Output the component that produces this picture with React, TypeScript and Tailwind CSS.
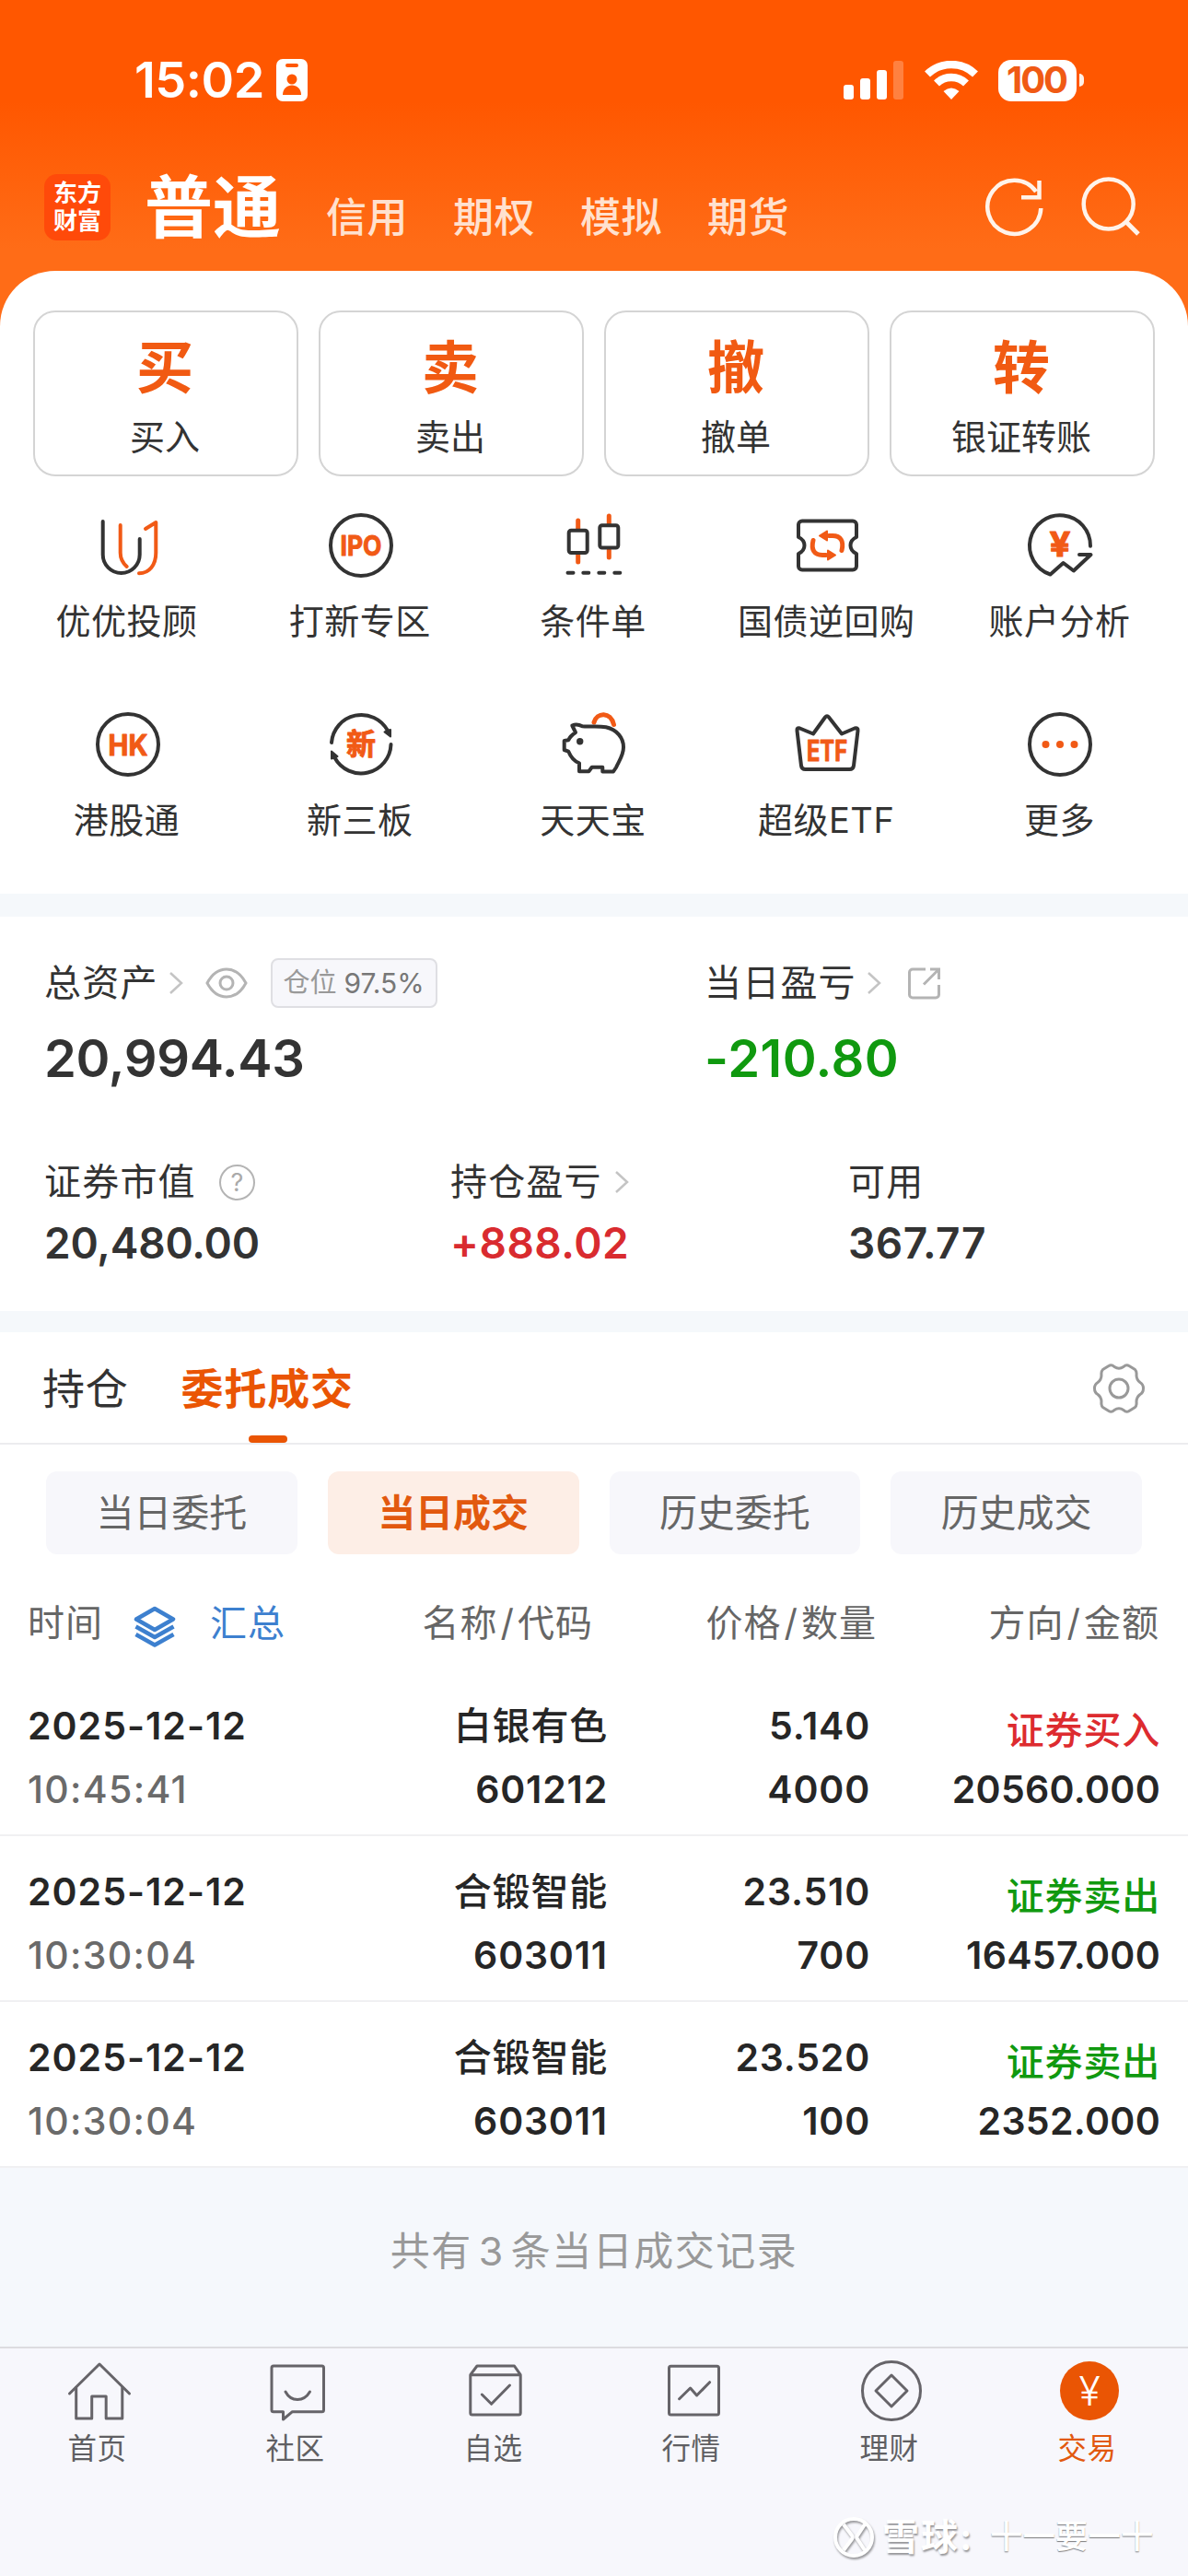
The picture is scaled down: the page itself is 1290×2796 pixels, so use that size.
import type { ReactNode } from "react";

const accountTabs = ["信用", "期权", "模拟", "期货"];

const quickActions = [
  { mark: "买", label: "买入" },
  { mark: "卖", label: "卖出" },
  { mark: "撤", label: "撤单" },
  { mark: "转", label: "银证转账" },
];

const DARK = "#333333";
const ORANGE = "#f15a16";

function GridIcon({ children }: { children: ReactNode }) {
  return (
    <svg
      width="72"
      height="72"
      viewBox="0 0 72 72"
      fill="none"
      stroke={DARK}
      strokeWidth="4"
      strokeLinecap="round"
      strokeLinejoin="round"
      className="overflow-visible"
    >
      {children}
    </svg>
  );
}

function IconText({ children, y, size, length }: { children: string; y: number; size: number; length: number }) {
  return (
    <text
      x="36"
      y={y}
      fontSize={size}
      fontWeight="700"
      textAnchor="middle"
      textLength={length}
      lengthAdjust="spacingAndGlyphs"
      fill={ORANGE}
      stroke={ORANGE}
      strokeWidth="1"
    >
      {children}
    </text>
  );
}

const features: { label: string; icon: ReactNode }[] = [
  {
    label: "优优投顾",
    icon: (
      <GridIcon>
        <path d="M8.7 10v36a20 20 0 0 0 40 0V29" />
        <path d="M27.7 14v30c0 6 2.5 11 7 15M55 18l11.3-7v33c0 13-7 22-18.3 22.3" stroke={ORANGE} />
      </GridIcon>
    ),
  },
  {
    label: "打新专区",
    icon: (
      <GridIcon>
        <circle cx="36" cy="36" r="33" />
        <IconText y={47} size={30} length={45}>IPO</IconText>
      </GridIcon>
    ),
  },
  {
    label: "条件单",
    icon: (
      <GridIcon>
        <path d="M18.7 9v9M18.7 46v8M52.3 4v8.5M52.3 41v8" stroke={ORANGE} strokeWidth="5" />
        <rect x="8.7" y="19.7" width="20" height="24.3" rx="2.5" />
        <rect x="42.3" y="14.3" width="20" height="24.3" rx="2.5" />
        <path d="M7.5 65.7h6M24.3 65.7h6M41.3 65.7h6M58.3 65.7h6" />
      </GridIcon>
    ),
  },
  {
    label: "国债逆回购",
    icon: (
      <GridIcon>
        <path d="M9 9.5h55a4 4 0 0 1 4 4V27q-6.5 3-6.5 9t6.5 9v13.5a4 4 0 0 1-4 4H9a4 4 0 0 1-4-4V45q6.5-3 6.5-9T5 27V13.5a4 4 0 0 1 4-4z" />
        <path d="M21 30.5c-2.5 10 1 16 10 16h4M52 41.5c2.5-10-1-16-10-16h-4" stroke={ORANGE} strokeWidth="5" />
        <path d="M37 41.5l8 5-8 5zM36 20.5l-8 5 8 5z" fill={ORANGE} stroke={ORANGE} strokeWidth="2" />
      </GridIcon>
    ),
  },
  {
    label: "账户分析",
    icon: (
      <GridIcon>
        <path d="M69 36.7A33 33 0 1 0 25.5 67.5L39.6 55l11.2 8.5L69.5 46H57" />
        <IconText y={48} size={37} length={23}>¥</IconText>
      </GridIcon>
    ),
  },
  {
    label: "港股通",
    icon: (
      <GridIcon>
        <circle cx="36" cy="36" r="33" />
        <IconText y={47.5} size={31} length={43}>HK</IconText>
      </GridIcon>
    ),
  },
  {
    label: "新三板",
    icon: (
      <GridIcon>
        <path d="M4 34A32.5 32.5 0 0 1 65 21M68.5 36A32.5 32.5 0 0 1 7.5 50.5" />
        <path d="M61.5 22.5l6.5-2.5v7.5zM4 43.5v8l6.5-2.5z" fill={DARK} strokeWidth="2" />
        <IconText y={47} size={32} length={32}>新</IconText>
      </GridIcon>
    ),
  },
  {
    label: "天天宝",
    icon: (
      <GridIcon>
        <path d="M36 12C39 1 54 0 57.5 14.5" stroke={ORANGE} strokeWidth="5" />
        <path d="M12.3 15.5q5-2.5 11 .8C32 17 40 15.5 49 17.3 61 20 68 29 68 39c0 9-5 15-8 22l-3 4.5H45.3v-4.8H33.7l-3.4 4.6H20v-9C14 54 10.5 49 8.3 43.7L3.7 42V32l4.6-.7Q10 27 16 23z" />
        <circle cx="20.7" cy="32.7" r="3.7" fill={DARK} stroke="none" />
      </GridIcon>
    ),
  },
  {
    label: "超级ETF",
    icon: (
      <GridIcon>
        <path d="M6.5 18.5L21 24.5 34 6.500q2-2.5 4 0L52 24.5l14-6q4-1 3.5 2.5l-4.5 38q-.5 4-4.5 4h-48q-4 0-4.5-4L3.500 21q-.5-3.5 3-2.5z" />
        <IconText y={54} size={31} length={44}>ETF</IconText>
      </GridIcon>
    ),
  },
  {
    label: "更多",
    icon: (
      <GridIcon>
        <circle cx="36" cy="36" r="33" />
        <g fill={ORANGE} stroke="none">
          <circle cx="20.5" cy="36" r="4" />
          <circle cx="36" cy="36" r="4" />
          <circle cx="51.5" cy="36" r="4" />
        </g>
      </GridIcon>
    ),
  },
];

const recordTabs = ["当日委托", "当日成交", "历史委托", "历史成交"];

const columns = [
  ["名称", "代码"],
  ["价格", "数量"],
  ["方向", "金额"],
];

const deals = [
  { date: "2025-12-12", time: "10:45:41", name: "白银有色", code: "601212", price: "5.140", qty: "4000", side: "buy", amount: "20560.000" },
  { date: "2025-12-12", time: "10:30:04", name: "合锻智能", code: "603011", price: "23.510", qty: "700", side: "sell", amount: "16457.000" },
  { date: "2025-12-12", time: "10:30:04", name: "合锻智能", code: "603011", price: "23.520", qty: "100", side: "sell", amount: "2352.000" },
];

const navItems: { label: string; active?: boolean; icon: ReactNode }[] = [
  {
    label: "首页",
    icon: (
      <>
        <path d="M3.5 39L36 7l32.5 32" />
        <path d="M10.7 32.5V66h17V42h15.5v24h17.6V32.5" />
      </>
    ),
  },
  {
    label: "社区",
    icon: (
      <>
        <path d="M10 9h52.5a2 2 0 0 1 2 2v45.7a2 2 0 0 1-2 2h-32L20.5 67v-8.3H10a2 2 0 0 1-2-2V11a2 2 0 0 1 2-2z" />
        <path d="M23 37q4.5 8.5 13 8.5T49.5 37" />
      </>
    ),
  },
  {
    label: "自选",
    icon: (
      <>
        <path d="M8.8 18.7h54.4V60a2 2 0 0 1-2 2H10.8a2 2 0 0 1-2-2zM8.8 18.7L16 9h40.5l6.7 9.7" />
        <path d="M21.3 40l10.3 10.3L51.5 30" />
      </>
    ),
  },
  {
    label: "行情",
    icon: (
      <>
        <rect x="9.5" y="9.3" width="54" height="52.7" rx="2" />
        <path d="M20.6 44.7l12-11.7 7 8 14-14.3" />
      </>
    ),
  },
  {
    label: "理财",
    icon: (
      <>
        <circle cx="36" cy="36" r="31.5" />
        <path d="M36 19l17 17-17 17-17-17z" />
      </>
    ),
  },
  {
    label: "交易",
    active: true,
    icon: (
      <>
        <circle cx="36" cy="36" r="32" fill="#ea5504" stroke="none" />
        <text x="36" y="52" fontSize="43" fontWeight="300" textAnchor="middle" fill="#fff" stroke="none">¥</text>
      </>
    ),
  },
];

function Chevron() {
  return (
    <svg width="16" height="26" viewBox="0 0 16 26" fill="none" stroke="#c4c4c4" strokeWidth="2.5">
      <path d="M2 2l12 11L2 24" />
    </svg>
  );
}

function StatusBar() {
  return (
    <div className="flex h-[174px] items-center pl-[146px] pr-[113px] text-white">
      <span className="w-[154px] text-[54px] font-semibold leading-none tracking-[-0.5px]">15:02</span>
      <svg width="34" height="46" viewBox="0 0 34 46">
        <rect width="34" height="46" rx="7" fill="#fff" />
        <rect x="10" y="5" width="14" height="4" rx="2" fill="#ff5700" />
        <circle cx="17" cy="22" r="5.5" fill="#ff5700" />
        <path d="M7 39c0-14 20-14 20 0z" fill="#ff5700" />
      </svg>
      <div className="ml-auto flex items-center">
        <svg width="66" height="42" viewBox="0 0 66 42" fill="#fff">
          <rect y="26" width="11" height="16" rx="3" />
          <rect x="18" y="19" width="11" height="23" rx="3" />
          <rect x="36" y="10" width="11" height="32" rx="3" />
          <rect x="54" width="11" height="42" rx="3" opacity="0.25" />
        </svg>
        <svg className="ml-[22px]" width="58" height="42" viewBox="0 0 58 42" fill="none" stroke="#fff" strokeWidth="8.5">
          <path d="M3 14.5a37.5 37.5 0 0 1 52 0" />
          <path d="M13 24.5a23 23 0 0 1 32 0" />
          <path d="M29 42l-8.500-9q8.500-7 17 0z" fill="#fff" stroke="none" />
        </svg>
        <div className="ml-[22px] flex h-[45px] w-[85px] items-center justify-center rounded-[14px] bg-white pr-[2px] text-[40px] font-bold leading-none tracking-[-2px] text-[#f05a14]">
          100
        </div>
        <div className="ml-[3px] h-[14px] w-[5px] rounded-r-full bg-[#fff0e6]" />
      </div>
    </div>
  );
}

function TitleBar() {
  return (
    <div className="flex h-[102px] items-center pl-12">
      <div className="flex h-[72px] w-[72px] flex-col items-center justify-center rounded-[14px] bg-[#ff4a0a] text-[26px] font-semibold leading-[30px] text-white">
        <span>东方</span>
        <span>财富</span>
      </div>
      <h1 className="ml-[37px] w-[148px] whitespace-nowrap text-[74px] font-bold leading-[98px] text-white">普通</h1>
      <div className="ml-[49px] flex gap-[49px] pt-[22px] text-[44px] font-medium leading-[50px] tracking-[0.5px] text-[#ffe1cf]">
        {accountTabs.map((tab) => (
          <span key={tab}>{tab}</span>
        ))}
      </div>
      <svg className="ml-auto mr-[51px]" width="170" height="72" viewBox="0 0 170 72" fill="none" stroke="#fff3ea" strokeWidth="4.5">
        <path d="M61.3 37A29 29 0 1 1 56 19M59.5 7v18.3H40" />
        <circle cx="134.7" cy="32.5" r="27" />
        <path d="M152.5 50.5L167 65" strokeWidth="5" />
      </svg>
    </div>
  );
}

function Assets() {
  return (
    <section className="h-[428px] px-[48px] pt-[45px] text-[#333]">
      <div className="grid grid-cols-[717px_1fr]">
        <div>
          <div className="flex h-[54px] items-center text-[40px] tracking-[1.2px]">
            总资产
            <span className="ml-[11px]"><Chevron /></span>
            <svg className="ml-[24px]" width="46" height="34" viewBox="0 0 46 34" fill="none" stroke="#b4b4b4" strokeWidth="3">
              <path d="M2 17Q10 2 23 2t21 15Q36 32 23 32T2 17z" />
              <circle cx="23" cy="17" r="7" />
            </svg>
            <div className="ml-[25px] flex h-[54px] w-[181px] items-center justify-center gap-[8px] rounded-lg border-2 border-[#dfdfe3] bg-[#f7f7fb] text-[29px] tracking-normal text-[#999]">
              <span>仓位</span>
              <span className="text-[30px] text-[#777]">97.5%</span>
            </div>
          </div>
          <div className="mt-[23px] text-[56px] font-semibold leading-[64px] tracking-[-0.3px]">20,994.43</div>
        </div>
        <div>
          <div className="flex h-[54px] items-center text-[40px] tracking-[1.2px]">
            当日盈亏
            <span className="ml-[11px]"><Chevron /></span>
            <svg className="ml-[28px]" width="38" height="36" viewBox="0 0 38 36" fill="none" stroke="#b4b4b4" strokeWidth="3">
              <path d="M20 3H6a3.5 3.5 0 0 0-3.5 3.5v24A3.5 3.5 0 0 0 6 34h25a3.5 3.5 0 0 0 3.5-3.5V20M25 3h9.5v11M34.5 3L18 19.5" />
            </svg>
          </div>
          <div className="mt-[23px] text-[56px] font-semibold leading-[64px] tracking-[0.5px] text-[#10990f]">-210.80</div>
        </div>
      </div>
      <div className="mt-[78px] grid grid-cols-[441px_432px_1fr]">
        <div>
          <div className="flex h-12 items-center text-[40px] tracking-[1.2px]">
            证券市值
            <span className="ml-[25px] flex h-[39px] w-[39px] items-center justify-center rounded-full border-[2.5px] border-[#b4b4b4] text-[27px] leading-none tracking-normal text-[#aaa]">
              ?
            </span>
          </div>
          <div className="mt-[14px] text-[46px] font-semibold leading-[56px] tracking-[-0.2px]">20,480.00</div>
        </div>
        <div>
          <div className="flex h-12 items-center text-[40px] tracking-[1.2px]">
            持仓盈亏
            <span className="ml-[13px]"><Chevron /></span>
          </div>
          <div className="mt-[14px] text-[46px] font-semibold leading-[56px] tracking-[0.5px] text-[#d92b2f]">+888.02</div>
        </div>
        <div>
          <div className="flex h-12 items-center text-[40px] tracking-[1.2px]">可用</div>
          <div className="mt-[14px] text-[46px] font-semibold leading-[56px] tracking-[0.5px]">367.77</div>
        </div>
      </div>
    </section>
  );
}

function Records() {
  return (
    <section>
      <div className="flex h-[122px] border-b-2 border-[#ececef] pl-[46px] pr-[47px] text-[46px] leading-[122px] tracking-[0.8px]">
        <span className="text-[#333]">持仓</span>
        <div className="relative ml-[57px] h-[120px] font-semibold text-[#ea5504]">
          委托成交
          <div className="absolute bottom-0 left-[73px] h-[8px] w-[42px] rounded-[4px] bg-[#ea5504]" />
        </div>
        <svg className="ml-auto mt-[33px]" width="56" height="56" viewBox="0 0 56 56" fill="none" stroke="#999" strokeWidth="3" strokeLinejoin="round">
          <path d="M17 3.5q3-2 6 1 5 3.5 10 0 3-3 6-1l6.5 4q2 2 1.5 6 0 5 4 8 3.5 2 3.5 6.5T51 34.5q-4 3-4 8 .5 4-1.500 6l-6.500 4q-3 2-6-1-5-3.500-10 0-3 3-6 1l-6.500-4q-2-2-1.500-6 0-5-4-8Q1.500 32.500 1.500 28T5 21.500q4-3 4-8-.5-4 1.500-6z" />
          <circle cx="28" cy="28" r="10" />
        </svg>
      </div>

      <div className="mt-[29px] flex gap-[33px] px-[50px]">
        {recordTabs.map((tab) => (
          <div
            key={tab}
            className={
              tab === "当日成交"
                ? "flex h-[90px] flex-1 items-center justify-center rounded-xl bg-[#fdeee6] pt-[2px] text-[41px] font-semibold text-[#e2590f]"
                : "flex h-[90px] flex-1 items-center justify-center rounded-xl bg-[#f7f7fb] pt-[2px] text-[41px] text-[#666]"
            }
          >
            {tab}
          </div>
        ))}
      </div>

      <div className="mt-[50px] grid h-[50px] grid-cols-[349px_265px_308px_307px] grid-rows-[50px] items-center pl-[30px] text-right text-[40px] leading-[50px] tracking-[1px] text-[#666]">
        <div className="flex h-[50px] items-center">
          时间
          <svg className="ml-[33px] mt-[8px]" width="46" height="46" viewBox="0 0 46 46" fill="none" stroke="#3d80cf" strokeWidth="4.5" strokeLinejoin="round">
            <path d="M23 3l20 11.5L23 26 3 14.5z" />
            <path d="M2.5 22.5L23 34l20.5-11.5M2.5 31L23 42.5 43.5 31" />
          </svg>
          <span className="ml-[37px] text-[#3d80cf]">汇总</span>
        </div>
        {columns.map(([first, second]) => (
          <span key={first}>
            {first}
            <span className="mx-[3px]">/</span>
            {second}
          </span>
        ))}
      </div>

      <div className="mt-[26px]">
        {deals.map((deal, i) => (
          <div
            key={i}
            className="grid h-[180px] grid-cols-[349px_281px_285px_315px] grid-rows-[50px_50px] gap-y-[19px] border-b-2 border-[#f0f0f2] pl-[30px] pt-[35px] text-right text-[41px] font-semibold leading-[50px] tracking-[0.8px] text-[#262626]"
          >
            <span className="text-left tracking-[1px]">{deal.date}</span>
            <span className="font-medium">{deal.name}</span>
            <span>{deal.price}</span>
            <span className={deal.side === "buy" ? "pt-[5px] font-medium text-[#dd2b2f]" : "pt-[5px] font-medium text-[#10990f]"}>
              {deal.side === "buy" ? "证券买入" : "证券卖出"}
            </span>
            <span className="text-left font-medium tracking-[1.3px] text-[#6a6a6a]">{deal.time}</span>
            <span>{deal.code}</span>
            <span>{deal.qty}</span>
            <span className="tracking-[0.3px]">{deal.amount}</span>
          </div>
        ))}
      </div>
    </section>
  );
}

function BottomNav() {
  return (
    <nav className="relative h-[249px] border-t-2 border-[#dcdce0] bg-[#f7f7fc] pt-[10px]">
      <div className="flex">
        {navItems.map((item) => (
          <div key={item.label} className="flex flex-1 flex-col items-center">
            <svg width="72" height="72" viewBox="0 0 72 72" fill="none" stroke="#666469" strokeWidth="3" strokeLinecap="round" strokeLinejoin="round">
              {item.icon}
            </svg>
            <span
              className={
                item.active
                  ? "mr-[4px] mt-[7px] text-[31.5px] leading-[40px] tracking-[0.5px] text-[#e2590f]"
                  : "mr-[4px] mt-[7px] text-[31.5px] leading-[40px] tracking-[0.5px] text-[#5f5f63]"
              }
            >
              {item.label}
            </span>
          </div>
        ))}
      </div>

      {/* watermark */}
      <div className="absolute left-[904px] top-[181px] flex h-[48px] items-center whitespace-nowrap text-white">
        <svg width="46" height="46" viewBox="0 0 46 46" fill="none" stroke="#fff" strokeWidth="4" className="drop-shadow-[1px_2px_1px_rgba(0,0,0,0.4)]">
          <circle cx="23" cy="23" r="20" />
          <path d="M12 9l9 12q1.5 2 0 4L12 37M35 9l-8 12q-1.5 2 0 4l8 12" />
        </svg>
        <span className="ml-[8px] w-[117px] text-[40px] font-bold tracking-[2px] [text-shadow:1px_2px_2px_rgba(0,0,0,0.4)]">雪球:</span>
        <span className="text-[35.5px] font-medium [text-shadow:0_1px_1px_rgba(0,0,0,0.5)]">十一要一十</span>
      </div>
    </nav>
  );
}

export default function App() {
  return (
    <div className="flex h-[2796px] w-[1290px] flex-col overflow-hidden bg-[#f5f8fc] font-[Inter,'Noto_Sans_CJK_SC',sans-serif]">
      <div className="bg-[linear-gradient(to_bottom,#ff5700_0px,#ff5700_110px,#ff6c17_270px,#ff6c17_360px)]">
        <StatusBar />
        <TitleBar />
        <main className="mt-[18px] h-[676px] rounded-t-[60px] bg-white pt-[43px]">
          <div className="flex gap-[22px] px-9">
            {quickActions.map((action) => (
              <div key={action.label} className="flex h-[180px] flex-1 flex-col items-center rounded-3xl border-2 border-[#d4d4d4] pt-[26px]">
                <span className="mr-[2px] text-[62px] font-bold leading-[70px] text-[#f15a12]">{action.mark}</span>
                <span className="mr-[2px] mt-[14px] text-[38px] leading-[50px] text-[#333]">{action.label}</span>
              </div>
            ))}
          </div>
          <div className="mt-[39px] grid grid-cols-5 px-3">
            {features.map((feature) => (
              <div key={feature.label} className="flex h-[216px] flex-col items-center">
                {feature.icon}
                <span className="mr-[2px] mt-[21px] text-[38px] leading-[50px] tracking-[0.5px] text-[#333]">{feature.label}</span>
              </div>
            ))}
          </div>
        </main>
      </div>
      <div className="h-[25px] shrink-0 bg-[#f5f8fb]" />
      <div className="bg-white">
        <Assets />
      </div>
      <div className="h-[23px] shrink-0 bg-[#f5f8fb]" />
      <div className="bg-white">
        <Records />
      </div>
      <div className="flex flex-1 items-center justify-center pb-[13px] text-[43px] tracking-[1.5px] text-[#999]">
        共有<span className="mx-[7px]">3</span>条当日成交记录
      </div>
      <BottomNav />
    </div>
  );
}
